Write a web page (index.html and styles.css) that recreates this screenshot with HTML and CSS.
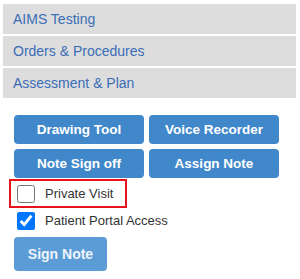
FILE: index.html
```html
<!DOCTYPE html>
<html lang="en">
<head>
    <meta charset="UTF-8">
    <meta name="viewport" content="width=device-width, initial-scale=1.0">
    <title>Note Actions</title>
    <link rel="stylesheet" href="styles.css">
</head>
<body>
    <div class="sections">
        <div class="section-bar">AIMS Testing</div>
        <div class="section-bar">Orders &amp; Procedures</div>
        <div class="section-bar">Assessment &amp; Plan</div>
    </div>

    <div class="actions">
        <button class="action-btn">Drawing Tool</button>
        <button class="action-btn">Voice Recorder</button>
        <button class="action-btn">Note Sign off</button>
        <button class="action-btn">Assign Note</button>
    </div>

    <div class="checks">
        <label class="check-row highlight">
            <input type="checkbox">
            <span>Private Visit</span>
        </label>
        <label class="check-row">
            <input type="checkbox" checked>
            <span>Patient Portal Access</span>
        </label>
    </div>

    <div class="sign">
        <button class="sign-btn">Sign Note</button>
    </div>
</body>
</html>
```

FILE: styles.css
```css
body {
    margin: 0;
    font-family: "Liberation Sans", Arial, sans-serif;
    background: #ffffff;
}

.sections {
    padding: 4px 4px 0 3px;
    display: flex;
    flex-direction: column;
    gap: 2px;
}
.section-bar {
    background-color: #dddddd;
    height: 30px;
    line-height: 30px;
    padding-left: 10px;
    font-size: 14px;
    color: #3a6db6;
}

.actions {
    margin-top: 17px;
    padding-left: 14px;
    display: grid;
    grid-template-columns: 130px 130px;
    column-gap: 5px;
    row-gap: 5px;
}
.action-btn {
    height: 29px;
    background-color: #4088ca;
    border: none;
    border-radius: 4px;
    color: #ffffff;
    font-family: "Liberation Sans", Arial, sans-serif;
    font-weight: bold;
    font-size: 13.5px;
    padding: 0;
    cursor: pointer;
}

.checks {
    margin-top: 1px;
    padding-left: 9px;
    display: flex;
    flex-direction: column;
}
.check-row {
    display: flex;
    align-items: center;
    height: 25px;
    font-size: 13px;
    color: #333333;
    padding-left: 8px;
    box-sizing: border-box;
}
.check-row input {
    width: 18px;
    height: 18px;
    margin: 0 10px 0 0;
}
.highlight {
    width: 118px;
    height: 29px;
    border: 2px solid #e8141c;
    padding-left: 6px;
}

.sign {
    margin-top: 4px;
    padding-left: 14px;
}
.sign-btn {
    width: 93px;
    height: 34px;
    background-color: #5b9cd6;
    border: none;
    border-radius: 4px;
    color: #eef4fb;
    font-family: "Liberation Sans", Arial, sans-serif;
    font-weight: bold;
    font-size: 14px;
    padding: 0;
}
```
